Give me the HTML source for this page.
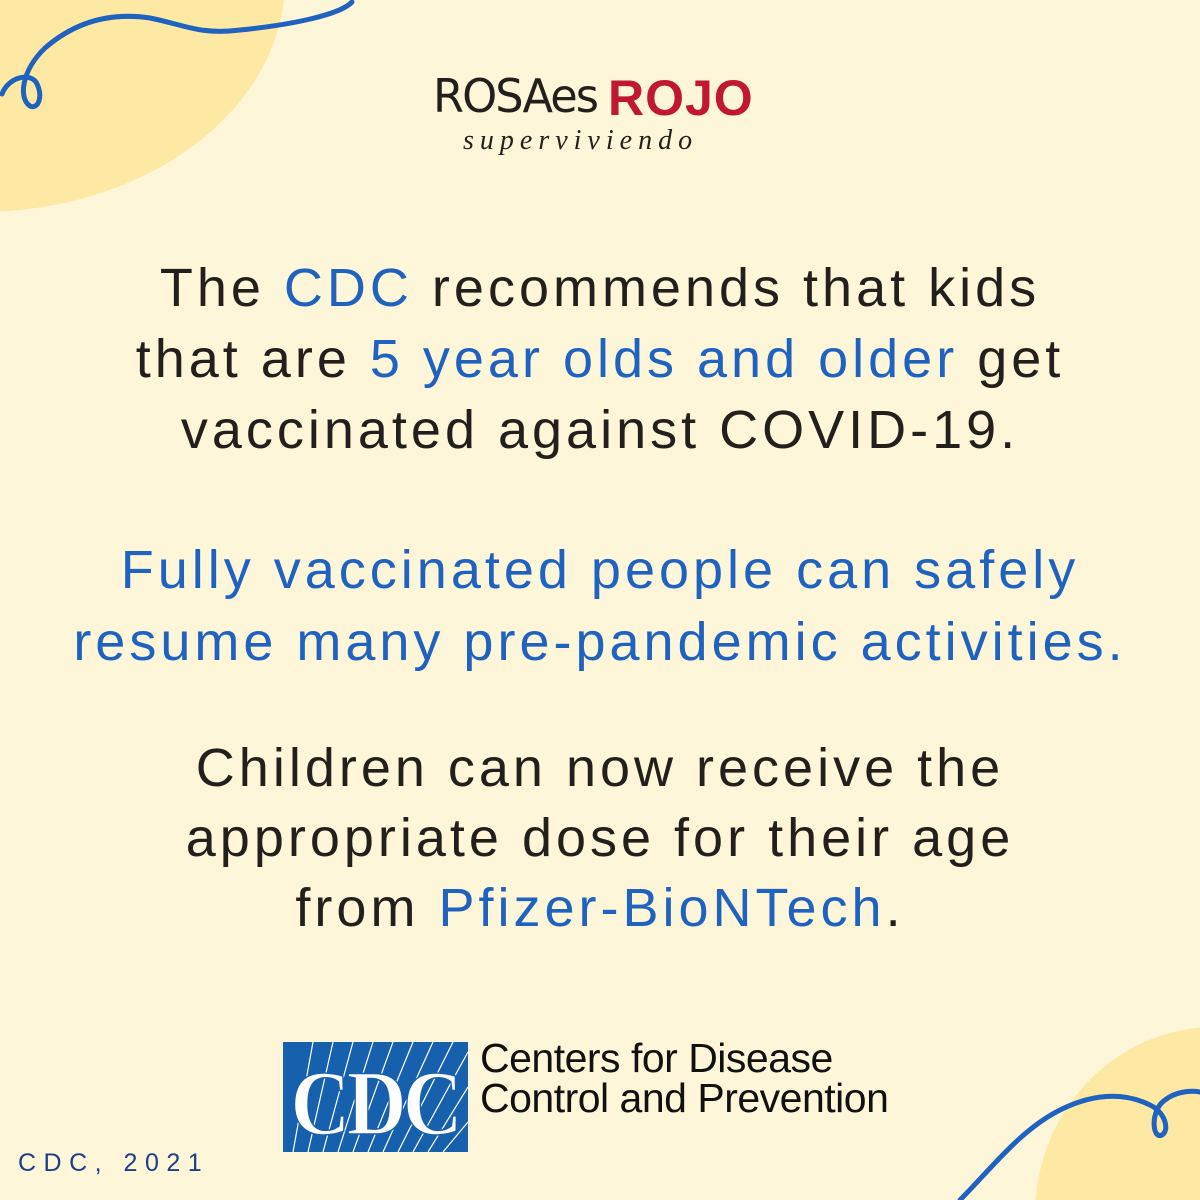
<!DOCTYPE html>
<html><head><meta charset="utf-8"><style>
html,body{margin:0;padding:0;overflow:hidden}
body{width:1200px;height:1200px;background:#fdf6d9;position:relative;overflow:hidden;font-family:"Liberation Sans",sans-serif}
.l{position:absolute;left:0;width:1200px;text-align:center;font-size:54px;letter-spacing:4px;color:#231f1c;white-space:nowrap;line-height:60px}
.b{color:#1f62bf}
</style></head><body>
<svg width="1200" height="1200" style="position:absolute;left:0;top:0">
<ellipse cx="-20" cy="-20" rx="305" ry="232" fill="#fde9a3"/>
<ellipse cx="1215" cy="1215" rx="180" ry="188" fill="#fde9a3"/>
<path d="M2,94 C8,78 28,72 36,82 C44,96 38,110 30,106 C18,98 22,70 45,48 C75,22 110,12 150,18 C185,25 200,35 240,30 C290,25 340,15 352,2" fill="none" stroke="#1f62bf" stroke-width="5" stroke-linecap="round"/>
<path d="M960,1200 C990,1170 1020,1130 1060,1110 C1100,1090 1130,1095 1150,1105 C1165,1112 1170,1130 1162,1135 C1152,1140 1150,1110 1165,1100 C1175,1092 1190,1090 1200,1092" fill="none" stroke="#1f62bf" stroke-width="5" stroke-linecap="round"/>
</svg>
<div style="position:absolute;left:433px;top:68px;line-height:56px;white-space:nowrap;letter-spacing:-2px"><span style="color:#231f1c;font-family:'DejaVu Sans',sans-serif;font-size:46px;transform:scaleX(.97);display:inline-block;transform-origin:left">ROSAes</span></div>
<div style="position:absolute;left:608px;top:70px;font-size:50px;line-height:56px;color:#c0182f;font-family:'Liberation Sans',sans-serif;letter-spacing:1px;font-weight:bold">ROJO</div>
<div style="position:absolute;left:463px;top:125px;font-size:28px;font-family:'Liberation Serif',serif;font-style:italic;letter-spacing:6px;color:#231f1c">superviviendo</div>

<div class="l" style="top:258px">The <span class="b">CDC</span> recommends that kids</div>
<div class="l" style="top:329px">that are <span class="b">5 year olds and older</span> get</div>
<div class="l" style="top:400px">vaccinated against COVID-19.</div>
<div class="l b" style="top:540px">Fully vaccinated people can safely</div>
<div class="l b" style="top:612px">resume many pre-pandemic activities.</div>
<div class="l" style="top:738px">Children can now receive the</div>
<div class="l" style="top:808px">appropriate dose for their age</div>
<div class="l" style="top:878px">from <span class="b">Pfizer-BioNTech</span>.</div>

<svg width="185" height="112" style="position:absolute;left:283px;top:1042px">
<rect width="185" height="110" fill="#1760ad"/>
<g stroke="#fff" stroke-width="1.2">
<path d="M40,110 L70,0 M55,110 L90,0 M70,110 L110,0 M85,110 L130,0 M100,110 L150,0 M115,110 L170,0 M130,110 L185,10 M145,110 L185,45 M160,110 L185,80 M25,110 L50,0 M10,110 L30,0"/>
</g>
<text x="92" y="92" text-anchor="middle" font-family="Liberation Serif,serif" font-weight="bold" font-size="92" fill="#fff" stroke="#1760ad" stroke-width="1.5" transform="scale(0.9,1) translate(10,0)" letter-spacing="-4">CDC</text>
</svg>
<div style="position:absolute;left:480px;top:1038px;font-size:41px;line-height:40px;color:#111;letter-spacing:-0.5px;white-space:nowrap">Centers for Disease<br>Control and Prevention</div>
<div style="position:absolute;left:18px;top:1148px;font-size:25px;line-height:30px;letter-spacing:7.5px;color:#1c3f86">CDC, 2021</div>
</body></html>
